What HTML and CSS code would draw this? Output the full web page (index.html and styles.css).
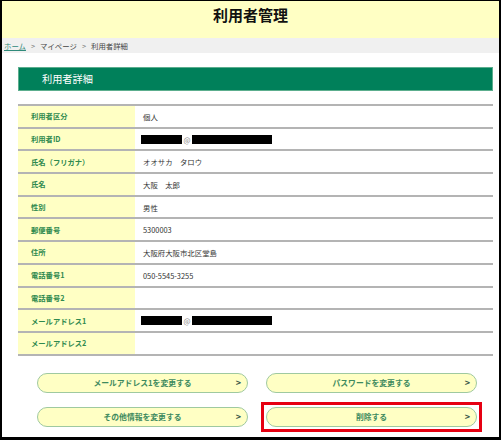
FILE: index.html
```html
<!DOCTYPE html>
<html lang="ja">
<head>
<meta charset="utf-8">
<title>利用者管理</title>
<link rel="stylesheet" href="styles.css">
</head>
<body>
<div class="frame">
  <header class="page-header"><h1>利用者管理</h1></header>
  <nav class="crumbs">
    <a href="#" class="crumb-link">ホーム</a><span class="sep">&gt;</span><span>マイページ</span><span class="sep">&gt;</span><span>利用者詳細</span>
  </nav>
  <main class="main">
    <div class="section-title">利用者詳細</div>
    <div class="detail">
      <div class="row"><div class="label">利用者区分</div><div class="value">個人</div></div>
      <div class="row"><div class="label">利用者ID</div><div class="value"><span class="redact r1"></span><span class="at">@</span><span class="redact r2"></span></div></div>
      <div class="row"><div class="label">氏名（フリガナ）</div><div class="value">オオサカ　タロウ</div></div>
      <div class="row"><div class="label">氏名</div><div class="value">大阪　太郎</div></div>
      <div class="row"><div class="label">性別</div><div class="value">男性</div></div>
      <div class="row"><div class="label">郵便番号</div><div class="value">5300003</div></div>
      <div class="row"><div class="label">住所</div><div class="value">大阪府大阪市北区堂島</div></div>
      <div class="row"><div class="label">電話番号1</div><div class="value">050-5545-3255</div></div>
      <div class="row"><div class="label">電話番号2</div><div class="value"></div></div>
      <div class="row"><div class="label">メールアドレス1</div><div class="value"><span class="redact r1"></span><span class="at">@</span><span class="redact r2"></span></div></div>
      <div class="row last"><div class="label">メールアドレス2</div><div class="value"></div></div>
    </div>
    <div class="actions">
      <a href="#" class="btn"><span class="btn-text">メールアドレス1を変更する</span><span class="chev">&gt;</span></a>
      <a href="#" class="btn"><span class="btn-text">パスワードを変更する</span><span class="chev">&gt;</span></a>
      <a href="#" class="btn"><span class="btn-text">その他情報を変更する</span><span class="chev">&gt;</span></a>
      <a href="#" class="btn highlighted"><span class="btn-text">削除する</span><span class="chev">&gt;</span></a>
    </div>
  </main>
</div>
</body>
</html>
```

FILE: styles.css
```css
html, body {
  margin: 0;
  padding: 0;
  background: #ffffff;
}
body {
  font-family: "Noto Sans CJK JP", "Noto Sans", sans-serif;
  color: #333333;
}
.frame {
  box-sizing: border-box;
  width: 501px;
  height: 440px;
  border-left: 2px solid #000;
  border-right: 2px solid #000;
  border-top: 1px solid #000;
  border-bottom: 3px solid #000;
  overflow: hidden;
  display: flex;
  flex-direction: column;
}
.page-header {
  background: #ffffc4;
  height: 37px;
  display: flex;
  align-items: center;
  justify-content: center;
}
.page-header h1 {
  margin: 0 0 10px 0;
  font-size: 15px;
  font-weight: bold;
  color: #111;
  letter-spacing: 0;
  line-height: 1;
}
.crumbs {
  background: #f0f0f0;
  height: 15px;
  display: flex;
  align-items: center;
  padding-left: 2px;
  font-size: 7.4px;
  color: #444;
  line-height: 1;
}
.crumb-link {
  color: #2f8a7a;
  text-decoration: underline;
}
.sep {
  color: #777;
  margin: 0 5px;
}
.main {
  padding: 14px 6px 0 16px;
}
.section-title {
  box-sizing: border-box;
  height: 24px;
  background: #00805a;
  border: 1px solid #5cae8e;
  color: #ffffff;
  font-size: 10.2px;
  line-height: 22px;
  padding-left: 23px;
}
.detail {
  margin-top: 13px;
}
.row {
  display: grid;
  grid-template-columns: 117px 1fr;
  height: 22.7px;
  box-sizing: border-box;
  border-top: 2px solid #b4b4b4;
}
.row.last {
  height: 24.7px;
  border-bottom: 2px solid #b4b4b4;
}
.label {
  background: #ffffc4;
  color: #2f8a4f;
  font-weight: bold;
  font-size: 7.3px;
  padding-left: 13px;
  display: flex;
  align-items: center;
}
.value {
  font-size: 7.4px;
  padding-left: 8px;
  display: flex;
  align-items: center;
  color: #333;
}
.redact {
  display: inline-block;
  height: 9px;
  background: #000;
}
.r1 {
  width: 41px;
  margin-left: -2px;
}
.r2 {
  width: 80px;
}
.at {
  color: #888;
  font-size: 7.4px;
  width: 10px;
  text-align: center;
}
.actions {
  display: grid;
  grid-template-columns: 211px 211px;
  column-gap: 18px;
  row-gap: 14px;
  margin-top: 17px;
  padding-left: 19px;
}
.btn {
  position: relative;
  box-sizing: border-box;
  height: 20px;
  border: 1.5px solid #9fc9a0;
  border-radius: 10px;
  background: #ffffc4;
  display: flex;
  align-items: center;
  justify-content: center;
  text-decoration: none;
  color: #3d8a5e;
  font-weight: bold;
  font-size: 7.8px;
}
.chev {
  position: absolute;
  right: 6px;
  top: 50%;
  transform: translateY(-55%);
  color: #3a5a4a;
  font-size: 9px;
  font-weight: bold;
}
.highlighted::after {
  content: "";
  position: absolute;
  top: -6px;
  bottom: -6px;
  left: -6px;
  right: -6px;
  border: 3px solid #e60012;
  pointer-events: none;
}
```
